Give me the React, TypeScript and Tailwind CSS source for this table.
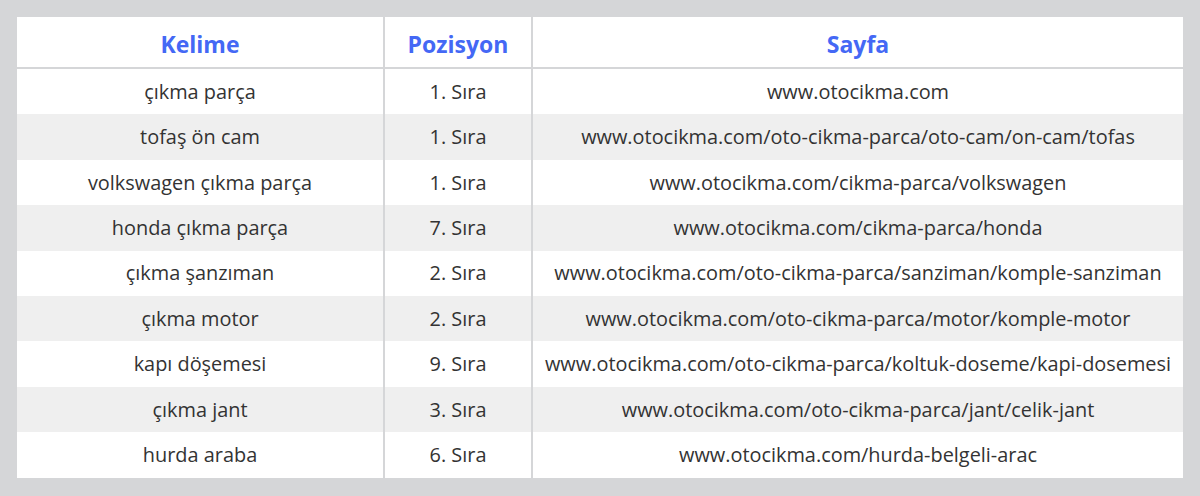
const rows = [
  ['çıkma parça', '1. Sıra', 'www.otocikma.com'],
  ['tofaş ön cam', '1. Sıra', 'www.otocikma.com/oto-cikma-parca/oto-cam/on-cam/tofas'],
  ['volkswagen çıkma parça', '1. Sıra', 'www.otocikma.com/cikma-parca/volkswagen'],
  ['honda çıkma parça', '7. Sıra', 'www.otocikma.com/cikma-parca/honda'],
  ['çıkma şanzıman', '2. Sıra', 'www.otocikma.com/oto-cikma-parca/sanziman/komple-sanziman'],
  ['çıkma motor', '2. Sıra', 'www.otocikma.com/oto-cikma-parca/motor/komple-motor'],
  ['kapı döşemesi', '9. Sıra', 'www.otocikma.com/oto-cikma-parca/koltuk-doseme/kapi-dosemesi'],
  ['çıkma jant', '3. Sıra', 'www.otocikma.com/oto-cikma-parca/jant/celik-jant'],
  ['hurda araba', '6. Sıra', 'www.otocikma.com/hurda-belgeli-arac'],
]

export default function App() {
  return (
    <div className="h-[496px] w-[1200px] bg-[#d5d6d8] p-[17px] font-['Open_Sans',sans-serif]">
      <div className="bg-white">
        {/* Header */}
        <div className="grid h-[52px] grid-cols-[368px_148px_650px] border-b-2 border-[#d5d6d8] text-[23px] font-bold text-[#4468f5]">
          <div className="flex items-center justify-center border-r-2 border-[#d5d6d8] pt-1">Kelime</div>
          <div className="flex items-center justify-center border-r-2 border-[#d5d6d8] pt-1">Pozisyon</div>
          <div className="flex items-center justify-center pt-1">Sayfa</div>
        </div>

        {rows.map((r, i) => (
          <div
            key={i}
            className={`grid h-[45.4px] grid-cols-[368px_148px_650px] text-[19.9px] text-[#333333] ${i % 2 === 1 ? 'bg-[#efefef]' : 'bg-white'}`}
          >
            <div className="flex items-center justify-center border-r-2 border-[#d5d6d8]">{r[0]}</div>
            <div className="flex items-center justify-center border-r-2 border-[#d5d6d8]">{r[1]}</div>
            <div className="flex items-center justify-center whitespace-nowrap">{r[2]}</div>
          </div>
        ))}
      </div>
    </div>
  )
}
